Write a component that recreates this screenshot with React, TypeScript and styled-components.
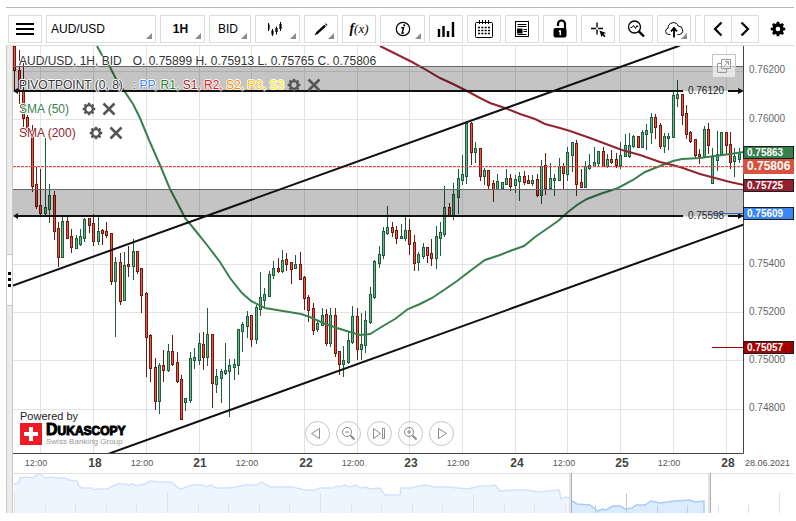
import React from "react";
import styled, { createGlobalStyle } from "styled-components";

const GlobalStyle = createGlobalStyle`
  body { margin: 0; background: #fff; color: #000; font: 12px/16px "Liberation Sans", Arial, sans-serif; }
  *, *::before, *::after { box-sizing: border-box; }
  button, select { font: inherit; color: inherit; margin: 0; padding: 0; cursor: pointer; }
`;

const Shell = styled.main`
  margin: 7px 2px 8px 6px;
  border-top: 1px solid #b8b8b8;
`;

const Toolbar = styled.header`
  display: flex;
  gap: 3px;
  padding: 7px 0 2px 2px;
  border-bottom: 1px solid #dcdcdc;
`;

const Tools = styled.div`
  display: flex;
  flex: 1;
  gap: 4px;
  min-width: 0;
  overflow: hidden;
`;

const Tool = styled.div<{ $width?: number; $corner?: boolean }>`
  position: relative;
  display: flex;
  flex: none;
  width: ${(p) => p.$width ?? 34}px;
  height: 28px;
  border: 1px solid #dcdcdc;
  background: #fff;
  &::after {
    content: "";
    display: ${(p) => (p.$corner ? "block" : "none")};
    position: absolute;
    right: 3px;
    bottom: 3px;
    border-left: 6px solid transparent;
    border-bottom: 6px solid #8c8c8c;
    pointer-events: none;
  }
`;

const ToolButton = styled.button`
  display: flex;
  flex: 1;
  align-items: center;
  justify-content: center;
  border: 0;
  background: none;
`;

const ToolSelect = styled.select<{ $bold?: boolean; $left?: boolean }>`
  flex: 1;
  width: 100%;
  appearance: none;
  border: 0;
  background: none;
  padding: ${(p) => (p.$left ? "0 0 0 4px" : "0 4px 0 0")};
  font-weight: ${(p) => (p.$bold ? 700 : 400)};
  text-align-last: ${(p) => (p.$left ? "left" : "center")};
`;

const Pager = styled.div`
  display: flex;
  width: 55px;
  height: 28px;
  border: 1px solid #dcdcdc;
  button + button { border-left: 1px solid #dcdcdc; }
`;

const SettingsButton = styled.button`
  display: flex;
  align-items: center;
  justify-content: center;
  width: 32px;
  height: 28px;
  border: 0;
  background: none;
`;

const Workspace = styled.div`
  display: flex;
`;

const SideRail = styled.div`
  display: flex;
  flex: none;
  align-items: center;
  width: 7px;
  border: solid #c8c8c8;
  border-width: 0 1px;
  background: #ebebeb;
`;

const RailHandle = styled.button`
  display: flex;
  flex-direction: column;
  align-items: center;
  justify-content: center;
  gap: 3px;
  width: 5px;
  height: 52px;
  border: solid #c8c8c8;
  border-width: 1px 0;
  background: #fff;
`;

const Dot = styled.i`
  width: 3px;
  height: 3px;
  background: #000;
`;

const Panels = styled.div`
  flex: 1;
  min-width: 0;
`;

const ChartPanel = styled.section`
  position: relative;
`;

const Drawing = styled.svg`
  display: block;
  width: 100%;
  height: auto;
  font-family: "Liberation Sans", Arial, sans-serif;
`;

const Legend = styled.div`
  position: absolute;
  top: 6px;
  left: 6px;
  display: flex;
  flex-direction: column;
  gap: 7px;
  color: #333;
  text-shadow: 1px 0 #fff, -1px 0 #fff, 0 1px #fff, 0 -1px #fff;
`;

const LegendRow = styled.div<{ $tone?: string; $gap?: number }>`
  display: flex;
  align-items: center;
  gap: ${(p) => p.$gap ?? 0}px;
  height: 17px;
  white-space: pre;
  color: ${(p) => p.$tone ?? "#333"};
`;

const Level = styled.span<{ $tone: string }>`
  color: ${(p) => p.$tone};
`;

const RowActions = styled.span`
  display: flex;
  gap: 6px;
`;

const IconButton = styled.button`
  display: flex;
  border: 0;
  background: none;
`;

const PopOut = styled.button`
  position: absolute;
  top: 8px;
  right: 58px;
  display: flex;
  align-items: center;
  justify-content: center;
  width: 24px;
  height: 24px;
  border: 1px solid #c4c4c4;
  background: rgba(255, 255, 255, 0.6);
`;

const Playback = styled.div`
  position: absolute;
  left: 0;
  right: 48px;
  bottom: 27px;
  display: flex;
  justify-content: center;
  gap: 6px;
`;

const RoundButton = styled.button`
  display: flex;
  align-items: center;
  justify-content: center;
  width: 25px;
  height: 25px;
  border: 1px solid #c6c6c6;
  border-radius: 50%;
  background: transparent;
`;

const Brand = styled.a`
  position: absolute;
  left: 7px;
  bottom: 26px;
  color: #222;
  text-decoration: none;
  font-size: 11px;
  line-height: 14px;
`;

const BrandLockup = styled.span`
  display: flex;
  gap: 4px;
`;

const BrandWords = styled.span`
  display: flex;
  flex-direction: column;
  white-space: nowrap;
`;

const BrandName = styled.span`
  display: block;
  height: 14px;
  font-size: 12px;
  font-weight: 700;
  line-height: 14px;
  color: #000;
  -webkit-text-stroke: 1px #000;
  &::first-letter { font-size: 16px; }
`;

const BrandLine = styled.span`
  font-size: 8px;
  line-height: 10px;
  color: #999;
`;

/* ---------- icons ---------- */

const GEAR =
  "M8.4 1h3.2l.5 2.4 1.5.6 2-1.4 2.3 2.3-1.4 2 .6 1.5 2.4.5v3.2l-2.4.5-.6 1.5 1.4 2-2.3 2.3-2-1.4-1.5.6-.5 2.4H8.4l-.5-2.4-1.5-.6-2 1.4-2.3-2.3 1.4-2-.6-1.5L.5 12.1V8.9l2.4-.5.6-1.5-1.4-2 2.3-2.3 2 1.4 1.5-.6z";

const Gear = ({ size, tone, hole }: { size: number; tone: string; hole: number }) => (
  <svg width={size} height={size} viewBox="0 0 20 21" fill={tone} fillRule="evenodd" aria-hidden="true">
    <path d={`${GEAR}M10 ${10.5 - hole}a${hole} ${hole} 0 1 0 .01 0z`} />
  </svg>
);

const Cross = () => (
  <svg width="14" height="14" viewBox="0 0 14 14" stroke="#555" strokeWidth="2.6" aria-hidden="true">
    <path d="M1.5 1.5l11 11M12.5 1.5l-11 11" />
  </svg>
);

const Glyph = ({ children }: { children: React.ReactNode }) => (
  <svg width="20" height="20" viewBox="0 0 20 20" fill="none" stroke="#000" aria-hidden="true">
    {children}
  </svg>
);

const icons = {
  menu: (
    <Glyph>
      <path d="M1 5h18M1 10h18M1 15h18" strokeWidth="2" />
    </Glyph>
  ),
  candles: (
    <Glyph>
      <path d="M1.5 4v8M5.5 10v7M9.500 7.500v8M9.500 3v0M13.500 3v9" transform="translate(-1 0)" />
      <path d="M.5 5.500v5M4.500 11.500v4M8.500 9v4M12.500 5v5" strokeWidth="2.200" />
    </Glyph>
  ),
  pencil: (
    <Glyph>
      <path d="M3.5 16.5l1.800-3.500 8-7.300 1.700 1.700-8 7.300z" fill="#000" stroke="none" />
      <path d="M14 5l.8-.8 1.700 1.700-.8.8z" fill="#000" stroke="none" />
    </Glyph>
  ),
  info: (
    <Glyph>
      <circle cx="10" cy="10" r="6.7" strokeWidth="1.2" />
      <circle cx="11.2" cy="6.3" r="1.1" fill="#000" stroke="none" />
      <path d="M8.3 8.8h2.2l-1.4 5.2h1.8" strokeWidth="1.4" />
    </Glyph>
  ),
  bars: (
    <Glyph>
      <path d="M3 18v-8M7.5 18v-11M12 18v-6M17 18V3" strokeWidth="2.4" />
    </Glyph>
  ),
  calendar: (
    <Glyph>
      <rect x="1.5" y="3.5" width="17" height="15" rx="1" />
      <path d="M5.5 1v4M8.500 1v4M11.500 1v4M14.500 1v4" />
      <path d="M4 8.500h12M4 11.500h12M4 14.500h12" strokeWidth="1.600" strokeDasharray="2 1.330" />
    </Glyph>
  ),
  news: (
    <Glyph>
      <rect x="3.5" y="2.5" width="13" height="15" />
      <path d="M5.5 5.500h9M5.500 7.500h9M11.500 10.500h3.500M11.500 12.500h3.500M5.500 15.500h9" />
      <rect x="5.5" y="10" width="4.5" height="4" fill="#000" />
    </Glyph>
  ),
  lock: (
    <Glyph>
      <path d="M8 7V5a3.500 3.500 0 0 1 7 0v5" strokeWidth="2.200" />
      <rect x="3.5" y="9" width="13" height="9.5" rx="2" fill="#000" stroke="none" />
      <path d="M10.300 11.200v5M8.800 12.300h1.500" stroke="#fff" strokeWidth="1.500" />
    </Glyph>
  ),
  crosshair: (
    <Glyph>
      <path d="M9 3.500v5M9 10.500v5M3 9.500h5M10 9.500h5" strokeWidth="1.400" />
      <path d="M11.500 11.500l6.500 2.500-2.500 1 2 2-1.200 1.200-2-2-.8 2z" fill="#000" stroke="none" />
    </Glyph>
  ),
  inspect: (
    <Glyph>
      <circle cx="8.5" cy="8" r="6" strokeWidth="1.3" />
      <path d="M4.5 8.500h1.500l1.500-2 2 3 1.500-3 1 1.500" />
      <path d="M12.800 12.300l5.200 5.200" strokeWidth="2.400" />
    </Glyph>
  ),
  cloud: (
    <Glyph>
      <path d="M6.500 15.500h-2a3.200 3.200 0 0 1-.4-6.300 5.300 5.300 0 0 1 10.200-2.200 4.300 4.300 0 0 1 1 8.500h-1.800" />
      <path d="M10 18.500v-8M7 12.500l3-3.500 3 3.500" strokeWidth="1.800" />
    </Glyph>
  ),
  back: (
    <Glyph>
      <path d="M13.5 3.500L7 10l6.500 6.500" strokeWidth="2.200" />
    </Glyph>
  ),
  forward: (
    <Glyph>
      <path d="M6.5 3.500L13 10l-6.500 6.500" strokeWidth="2.200" />
    </Glyph>
  ),
  none: null,
};

const Formula = styled.span`
  font: italic 700 14px/16px "Liberation Serif", serif;
  i { font-size: 13px; font-weight: 400; }
`;

const Soft = ({ children }: { children: React.ReactNode }) => (
  <svg width="15" height="15" viewBox="0 0 15 15" fill="none" stroke="#8a8a8a" aria-hidden="true">
    {children}
  </svg>
);

const playback: [string, React.ReactNode][] = [
  ["Scroll left", <path d="M9.500 2.500v10l-8-5z" />],
  ["Zoom out", <><circle cx="6" cy="6" r="4.500" /><path d="M4 6h4" /><path d="M9.500 9.500l4 4" strokeWidth="2" /></>],
  ["Go to latest", <><path d="M1.500 2.500v10l7-5z" /><path d="M10.500 2.500h2v10h-2z" /></>],
  ["Zoom in", <><circle cx="6" cy="6" r="4.500" /><path d="M4 6h4M6 4v4" /><path d="M9.500 9.500l4 4" strokeWidth="2" /></>],
  ["Scroll right", <path d="M4.500 2.500v10l8-5z" />],
];

/* ---------- chart data ---------- */

/* x, high, body top, body bottom, low; a trailing 1 marks a rising candle */
const candles: number[][] = [
  [14,46,46,70,90,0],[19,50,70,91,103,0],[23,63,91,118,129,0],[27,115,117,131,133,0],[32,125,130,186,191,0],
  [36,167,184,206,208,0],[40,169,205,213,214,0],[45,138,207,213,215,1],[49,184,195,209,222,1],[54,191,195,231,239,0],
  [58,222,228,257,266,0],[62,216,221,257,257,1],[67,217,221,238,238,0],[71,229,236,247,252,0],[76,235,238,248,248,1],
  [80,229,236,244,245,1],[84,218,219,238,241,1],[89,218,218,225,232,0],[93,214,223,241,245,0],[98,217,231,241,244,1],
  [102,229,230,233,244,0],[106,222,231,235,237,0],[111,233,233,281,284,0],[115,257,262,281,336,1],[120,253,262,301,304,0],
  [124,252,265,300,300,1],[128,246,264,266,276,0],[133,239,251,266,279,1],[137,251,251,271,273,0],[141,268,268,295,312,0],
  [146,292,293,337,376,0],[150,334,335,368,381,0],[155,358,367,401,409,0],[159,363,365,401,413,1],[163,350,365,370,381,0],
  [168,344,351,370,371,1],[172,335,351,364,365,0],[177,352,362,381,382,0],[181,375,379,419,419,0],[185,398,398,402,410,1],
  [190,352,358,400,402,1],[194,348,357,360,368,1],[199,333,343,360,364,1],[203,332,344,357,369,0],[207,308,334,357,365,1],
  [212,334,334,383,407,0],[216,369,376,384,392,1],[221,369,371,378,402,1],[225,343,370,373,374,1],[229,359,365,371,416,1],
  [234,359,364,367,379,1],[238,329,329,365,374,1],[242,322,324,331,351,1],[247,311,316,326,337,1],[251,315,315,339,346,0],
  [256,305,307,339,343,1],[260,272,297,309,315,1],[264,288,294,300,308,1],[269,271,274,296,296,1],[273,261,268,275,278,1],
  [278,258,268,271,272,0],[282,250,260,271,272,1],[286,253,259,264,270,0],[291,262,262,269,283,0],[295,255,264,268,268,1],
  [300,252,264,279,279,0],[304,276,277,298,309,0],[308,295,297,310,321,0],[313,303,308,330,334,0],[317,320,323,329,331,1],
  [322,308,315,325,325,1],[326,309,314,343,345,0],[330,308,315,343,346,1],[335,308,315,353,356,0],[339,351,351,364,374,0],
  [343,346,360,364,376,1],[348,331,340,362,363,1],[352,306,316,342,343,1],[357,308,316,349,359,0],[361,313,344,349,359,1],
  [365,311,320,345,352,1],[370,287,294,322,323,1],[374,260,261,297,298,1],[379,246,254,263,267,1],[383,227,231,255,258,1],
  [387,206,227,233,234,1],[392,222,227,232,236,0],[396,226,230,238,243,0],[401,224,236,238,238,1],[405,216,230,238,240,1],
  [409,219,230,244,254,0],[414,235,242,263,270,0],[418,252,254,262,270,1],[423,243,247,256,258,1],[427,247,247,255,262,0],
  [431,239,253,258,265,0],[436,226,236,258,268,1],[440,222,232,238,255,1],[444,186,207,234,236,1],[449,203,207,216,216,0],
  [453,183,194,216,219,1],[458,169,178,197,213,1],[462,155,174,180,184,1],[466,122,123,176,183,1],[471,122,123,152,164,0],
  [475,142,148,152,162,1],[480,148,148,176,180,0],[484,168,170,176,184,1],[488,170,170,185,188,0],[493,180,183,189,201,0],
  [497,174,181,189,189,1],[502,182,182,188,188,1],[506,169,178,184,184,1],[510,174,178,186,190,0],[515,175,179,185,192,1],
  [519,172,176,181,200,1],[524,171,176,182,184,0],[528,175,180,183,183,0],[532,175,180,183,185,1],[537,174,179,195,196,0],
  [541,160,166,195,203,1],[545,153,165,188,194,0],[550,163,178,188,188,1],[554,174,178,180,195,1],[559,158,166,180,180,1],
  [563,163,166,173,188,0],[567,147,152,174,180,1],[572,142,142,155,171,1],[576,140,143,184,195,0],[581,169,182,187,187,0],
  [585,161,166,187,187,1],[589,154,165,168,169,1],[594,147,162,166,166,1],[598,151,151,163,166,1],[603,147,151,166,166,0],
  [607,154,159,166,167,1],[611,150,159,162,163,0],[616,153,159,165,167,0],[620,142,155,165,168,1],[625,134,145,156,156,1],
  [629,133,145,156,157,1],[633,135,136,146,147,1],[638,136,136,147,147,0],[642,130,132,147,147,1],[646,124,130,134,149,1],
  [651,113,117,132,143,1],[655,114,117,127,138,0],[660,123,125,146,148,0],[664,133,136,146,152,1],[668,133,136,138,149,1],
  [673,91,95,137,137,1],[677,80,94,98,106,1],[682,94,94,115,124,0],[686,105,113,134,138,0],[690,131,132,141,142,0],
  [695,139,139,155,157,0],[699,149,154,156,163,0],[704,126,129,156,156,1],[708,123,129,145,153,0],[712,148,157,183,183,1],
  [717,131,154,160,170,1],[721,132,132,154,154,1],[726,132,132,145,153,0],[730,132,144,162,168,0],[734,148,156,161,176,1],
  [739,148,152,159,162,1],
];

const gridX = [40, 93, 146, 199, 251, 304, 357, 409, 462, 515, 567, 620, 673, 726];
const gridY = [71, 119, 167, 216, 264, 312, 360, 409];

const sma50 =
  "97,46 103,57 110,67 117,81 125,92 133,104 140,118 149,140 160,165 170,189 180,208 185,218 195,230 207,245 220,262 230,278 242,293 251,301 265,308 283,311 301,314 310,317 323,323 337,328 350,332 360,335 370,334 375,331 383,326 395,319 408,309 420,304 432,298 444,290 457,281 470,271 485,260 500,255 510,251 524,246 535,237 548,228 558,221 568,212 577,205 587,199 600,194 618,188 633,180 645,172 660,166 673,161 682,159 700,158 715,156 730,154 744,152";
const sma200 =
  "380,46 388,50 400,56 412,62 423,68 440,78 453,84 467,91 480,98 490,103 505,108 520,114 535,119 545,124 560,128 570,131 590,138 606,144 622,150 640,155 660,162 680,167 700,174 715,178 730,182 744,185";

const axisPrices: [string, number][] = [
  ["0.76200", 73], ["0.76000", 122], ["0.75400", 267], ["0.75200", 315], ["0.75000", 363], ["0.74800", 411],
];
const tags: [string, number, string][] = [
  ["0.75863", 146, "#35804d"], ["0.75725", 179, "#92202f"], ["0.75609", 207, "#3a86f2"], ["0.75057", 341, "#a30000"],
];
const days: [string, number][] = [["18", 95], ["21", 200], ["22", 306], ["23", 411], ["24", 517], ["25", 622], ["28", 728]];
const noons = [36, 142, 247, 353, 458, 564, 669];

const overview =
  "14,484 19,483 20,478 25,477 34,478 36,475 40,474 43,476 45,478 52,477 55,478 66,478 69,480 77,481 79,486 82,488 92,488 94,490 98,489 107,489 113,486 118,484 125,484 128,485 133,484 136,486 145,484 150,481 160,482 170,482 174,484 178,488 182,489 186,487 192,485 203,485 206,487 211,485 216,488 228,488 236,487 241,486 245,485 257,485 261,482 265,484 270,487 292,487 305,490 315,490 320,488 333,488 336,486 340,487 345,485 350,487 356,485 360,488 366,487 370,489 380,488 385,495 400,495 401,488 410,488 425,485 435,487 448,487 468,489 480,486 489,486 495,485 500,491 515,490 526,490 538,492 559,490 561,499 566,497 570,498";
const selection =
  "572,501 577,504 590,505 595,509 598,511 603,509 606,510 613,506 620,506 625,509 632,508 636,505 645,505 651,501 660,503 675,501 690,500 695,502 704,501";

const Candles = () => (
  <g shapeRendering="crispEdges">
    {candles.map(([x, high, top, bottom, low, up]) => (
      <g key={x}>
        <path d={`M${x + 0.5} ${high}V${low + 1}`} stroke={up ? "#1f5c3b" : "#6b1b12"} />
        <rect x={x - 1} y={top} width="3" height={Math.max(2, bottom - top + 1)} fill={up ? "#1f5c3b" : "#6b1b12"} />
        <rect x={x} y={top + 1} width="1" height={Math.max(0, bottom - top - 1)} fill={up ? "#66b58c" : "#ee5640"} />
      </g>
    ))}
  </g>
);

const Zone = ({ top, line, label }: { top: number; line: number; label: string }) => (
  <g>
    <rect x="13" y={top} width="731" height={line - top} fill="#000" fillOpacity="0.23" />
    <path d={`M13 ${top + 0.5}H744`} stroke="#666" />
    <path d={`M15 ${line}H683M728 ${line}H742`} stroke="#111" strokeWidth="2" />
    <path d={`M13 ${line}l5-3v6zM744 ${line}l-6-3v6z`} fill="#111" />
    <text x="706" y={line + 3} textAnchor="middle" fontSize="10" fill="#222">{label}</text>
  </g>
);

const PriceChart = () => (
  <Drawing viewBox="13 46 781 427" role="img" aria-label="AUD/USD hourly candlestick chart">
    <defs>
      <clipPath id="plot"><rect x="13" y="46" width="731" height="407" /></clipPath>
    </defs>
    <g stroke="#e3e3e3" shapeRendering="crispEdges">
      {gridX.map((x) => <path key={x} d={`M${x + 0.5} 46V453`} />)}
      {gridY.map((y) => <path key={y} d={`M13 ${y + 0.5}H744`} />)}
    </g>
    <g clipPath="url(#plot)">
      <Candles />
      <g fill="none" strokeWidth="2">
        <polyline points={sma50} stroke="#3a804f" />
        <polyline points={sma200} stroke="#92252f" />
      </g>
      <path d="M13 166.5H744" stroke="#e0503c" strokeDasharray="3 1" />
      <Zone top={66} line={91} label="0.76120" />
      <Zone top={189} line={216} label="0.75598" />
      <path d="M13 285.5L680 45.5M108 454L744 224.5" stroke="#111" strokeWidth="2" />
      <path d="M712 213.5H744" stroke="#2f65b0" />
      <path d="M712 347.5H744" stroke="#a30000" />
    </g>
    <path d="M743.5 46V453.5H13" fill="none" stroke="#444" />
    <g fontSize="10" fill="#666">
      {axisPrices.map(([label, y]) => <text key={label} x="749" y={y}>{label}</text>)}
    </g>
    {tags.map(([label, y, tone]) => (
      <g key={label}>
        <rect x="743.5" y={y + 0.5} width="50" height="12" fill={tone} stroke="#1c1c1c" />
        <text x="747" y={y + 10} fontSize="10" fontWeight="700" fill="#fff">{label}</text>
      </g>
    ))}
    <rect x="743" y="159" width="51" height="15" fill="#d65340" />
    <text x="747" y="170" fontSize="12" fontWeight="700" fill="#fff">0.75806</text>
    <g textAnchor="middle" fill="#555">
      {noons.map((x) => <text key={x} x={x} y="466" fontSize="9">12:00</text>)}
      {days.map(([label, x]) => <text key={x} x={x} y="467" fontSize="12" fontWeight="700" fill="#444">{label}</text>)}
    </g>
    <text x="745" y="466" fontSize="9" fill="#555">28.06.2021</text>
  </Drawing>
);

const Navigator = () => (
  <Drawing viewBox="13 473 781 40" role="img" aria-label="Price history overview">
    <path d={`M14,513 L${overview} 570,513z`} fill="#edf6ff" />
    <polyline points={overview} fill="none" stroke="#d3e2fb" strokeWidth="1.5" />
    <path d={`M572,513 L${selection} 704,513z`} fill="#dbecfe" />
    <polyline points={`${selection} 704,513`} fill="none" stroke="#a9cbf7" strokeWidth="1.5" />
    {Array.from({ length: 26 }, (_, i) => (
      <path
        key={i}
        d={`M${Math.round(14 + i * 30.6) + 0.5} ${i % 5 ? 505 : 493}V513`}
        stroke={i > 18 && i < 23 ? "#c8ccd0" : "#e0e3e6"}
      />
    ))}
    <path d="M13 473.5H794" stroke="#e0e0e0" />
    <path d="M570 473V513M709 473V513" stroke="#e2e2e2" strokeWidth="2" />
    <path d="M571.5 473V513M710.5 473V513" stroke="#b0b0b0" />
  </Drawing>
);

type ToolSpec = { label: string; icon: React.ReactNode; width?: number; corner?: boolean };

const tools: ToolSpec[] = [
  { label: "Chart type", icon: icons.candles, width: 45, corner: true },
  { label: "Drawing tools", icon: icons.pencil, corner: true },
  { label: "Indicators", icon: <Formula>f<i>(x)</i></Formula> },
  { label: "Information", icon: icons.info, width: 45, corner: true },
  { label: "Volumes", icon: icons.bars },
  { label: "Calendar", icon: icons.calendar },
  { label: "News", icon: icons.news },
  { label: "Lock drawings", icon: icons.lock },
  { label: "Crosshair", icon: icons.crosshair },
  { label: "Inspect", icon: icons.inspect },
  { label: "Save to cloud", icon: icons.cloud, corner: true },
  { label: "More tools", icon: icons.none },
];

const levels: [string, string][] = [
  ["PP", "#3a86f2"], ["R1", "#2f7d1f"], ["S1", "#a8202c"], ["R2", "#f01818"], ["S2", "#ff8c00"], ["R3", "#ffc400"], ["S3", "#ffee00"],
];

const Actions = ({ name }: { name: string }) => (
  <RowActions>
    <IconButton aria-label={`${name} settings`}><Gear size={14} tone="#555" hole={4} /></IconButton>
    <IconButton aria-label={`Remove ${name}`}><Cross /></IconButton>
  </RowActions>
);

export default function App() {
  return (
    <>
      <GlobalStyle />
      <Shell>
        <Toolbar>
          <Tools>
            <Tool><ToolButton aria-label="Menu">{icons.menu}</ToolButton></Tool>
            <Tool $width={110} $corner>
              <ToolSelect $left aria-label="Instrument"><option>AUD/USD</option></ToolSelect>
            </Tool>
            <Tool $width={45} $corner>
              <ToolSelect $bold aria-label="Period"><option>1H</option></ToolSelect>
            </Tool>
            <Tool $width={42} $corner>
              <ToolSelect aria-label="Price side"><option>BID</option></ToolSelect>
            </Tool>
            {tools.map((t) => (
              <Tool key={t.label} $width={t.width} $corner={t.corner}>
                <ToolButton aria-label={t.label}>{t.icon}</ToolButton>
              </Tool>
            ))}
          </Tools>
          <Pager>
            <ToolButton aria-label="Previous tools">{icons.back}</ToolButton>
            <ToolButton aria-label="Next tools">{icons.forward}</ToolButton>
          </Pager>
          <SettingsButton aria-label="Settings"><Gear size={16} tone="#000" hole={3} /></SettingsButton>
        </Toolbar>
        <Workspace>
          <SideRail>
            <RailHandle aria-label="Toggle side panel"><Dot /><Dot /><Dot /></RailHandle>
          </SideRail>
          <Panels>
            <ChartPanel>
              <PriceChart />
              <Legend>
                <LegendRow $gap={11}>
                  <span>AUD/USD, 1H, BID</span>
                  <span>O. 0.75899 H. 0.75913 L. 0.75765 C. 0.75806</span>
                </LegendRow>
                <LegendRow>
                  <span>{"PIVOTPOINT (0, 8)   : "}</span>
                  {levels.map(([name, tone], i) => (
                    <Level key={name} $tone={tone}>{name}{i < levels.length - 1 ? ", " : " "}</Level>
                  ))}
                  <Actions name="PIVOTPOINT" />
                </LegendRow>
                <LegendRow $tone="#3a804f" $gap={13}>SMA (50)<Actions name="SMA 50" /></LegendRow>
                <LegendRow $tone="#92252f" $gap={13}>SMA (200)<Actions name="SMA 200" /></LegendRow>
              </Legend>
              <PopOut aria-label="Open in new window">
                <svg width="16" height="16" viewBox="0 0 16 16" fill="none" stroke="#999" aria-hidden="true">
                  <path d="M5.5 1.5h9v9h-9z" />
                  <path d="M5 5.5H1.5v9h9V11M8 8l4-4M9 3.5h3.5V7" />
                </svg>
              </PopOut>
              <Brand href="#dukascopy">
                Powered by
                <BrandLockup>
                  <svg width="22" height="22" viewBox="0 0 22 22" aria-hidden="true">
                    <path d="M0 0h22v22H0z" fill="#ed1c24" />
                    <path d="M9 4h4v5h5v4h-5v5H9v-5H4V9h5z" fill="#fff" />
                  </svg>
                  <BrandWords>
                    <BrandName>DUKASCOPY</BrandName>
                    <BrandLine>Swiss Banking Group</BrandLine>
                  </BrandWords>
                </BrandLockup>
              </Brand>
              <Playback>
                {playback.map(([label, art]) => (
                  <RoundButton key={label} aria-label={label}><Soft>{art}</Soft></RoundButton>
                ))}
              </Playback>
            </ChartPanel>
            <Navigator />
          </Panels>
        </Workspace>
      </Shell>
    </>
  );
}
